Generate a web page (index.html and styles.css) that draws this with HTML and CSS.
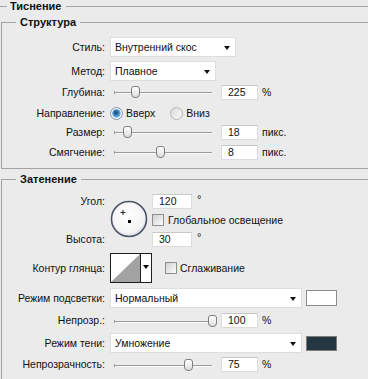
FILE: index.html
```html
<!DOCTYPE html>
<html lang="ru">
<head>
<meta charset="utf-8">
<title>Тиснение</title>
<link rel="stylesheet" href="styles.css">
</head>
<body>
<div class="panel">
  <div class="heading"><span class="hline short"></span><span class="htext">Тиснение</span><span class="hline"></span></div>

  <fieldset class="group structure">
    <legend>Структура</legend>
    <div class="row h20">
      <span class="lbl">Стиль:</span>
      <div class="select w-style"><span>Внутренний скос</span><i class="arrow"></i></div>
    </div>
    <div class="row h20 mt4">
      <span class="lbl">Метод:</span>
      <div class="select w-method"><span>Плавное</span><i class="arrow"></i></div>
    </div>
    <div class="row h16 mt3">
      <span class="lbl">Глубина:</span>
      <div class="slider"><span class="track"></span><span class="thumb" style="left:21px"></span></div>
      <div class="input w-num">225</div><span class="unit">%</span>
    </div>
    <div class="row h16 mt5">
      <span class="lbl">Направление:</span>
      <span class="radio-item">
        <svg class="radio" width="13" height="13" viewBox="0 0 13 13">
          <defs><radialGradient id="rbsel" cx="45%" cy="40%" r="60%"><stop offset="0" stop-color="#1a3f66"/><stop offset="0.35" stop-color="#2b6ca8"/><stop offset="1" stop-color="#7ec0ec"/></radialGradient></defs>
          <circle cx="6.5" cy="6.5" r="6" fill="#eef3f7" stroke="#7f97ad"/>
          <circle cx="6.5" cy="6.5" r="4.2" fill="url(#rbsel)"/>
        </svg>Вверх</span>
      <span class="radio-item second">
        <svg class="radio" width="13" height="13" viewBox="0 0 13 13">
          <defs><linearGradient id="rboff" x1="0" y1="0" x2="1" y2="1"><stop offset="0" stop-color="#d9d9d9"/><stop offset="1" stop-color="#fbfbfb"/></linearGradient></defs>
          <circle cx="6.5" cy="6.5" r="6" fill="url(#rboff)" stroke="#b4b4b4"/>
        </svg>Вниз</span>
    </div>
    <div class="row h16 mt3">
      <span class="lbl">Размер:</span>
      <div class="slider"><span class="track"></span><span class="thumb" style="left:13px"></span></div>
      <div class="input w-num">18</div><span class="unit">пикс.</span>
    </div>
    <div class="row h16 mt4">
      <span class="lbl">Смягчение:</span>
      <div class="slider"><span class="track"></span><span class="thumb" style="left:46px"></span></div>
      <div class="input w-num">8</div><span class="unit">пикс.</span>
    </div>
  </fieldset>

  <fieldset class="group shading">
    <legend>Затенение</legend>
    <div class="angle-block">
      <div class="lbl lbl-stack"><span>Угол:</span><span>Высота:</span></div>
      <svg class="dial" width="38" height="38" viewBox="0 0 38 38">
        <defs><radialGradient id="dialfill" cx="45%" cy="40%" r="60%"><stop offset="0" stop-color="#ffffff"/><stop offset="0.8" stop-color="#f4f4f6"/><stop offset="1" stop-color="#dcdde3"/></radialGradient></defs>
        <circle cx="19" cy="19" r="17.5" fill="url(#dialfill)" stroke="#4d5468" stroke-width="1.6"/>
        <path d="M13 10v5M10.5 12.5h5" stroke="#222" stroke-width="1"/>
        <rect x="18" y="20" width="3" height="3" fill="#000"/>
      </svg>
      <div class="angle-fields">
        <div class="frow h15"><div class="input w-angle">120</div><span class="deg">°</span></div>
        <div class="check-row mt5"><span class="checkbox"></span><span>Глобальное освещение</span></div>
        <div class="frow h14 mt6"><div class="input w-angle">30</div><span class="deg">°</span></div>
      </div>
    </div>
    <div class="row h30 mt7">
      <span class="lbl">Контур глянца:</span>
      <svg class="contour" width="42" height="30" viewBox="0 0 42 30">
        <rect x="0.5" y="0.5" width="41" height="29" fill="#fff" stroke="#1e1e1e"/>
        <polygon points="1,29 30,1 30,29" fill="#a2a2a2"/>
        <line x1="30.5" y1="1" x2="30.5" y2="29" stroke="#1e1e1e"/>
        <polygon points="33,12 39,12 36,16" fill="#000"/>
      </svg>
      <span class="check-row smooth"><span class="checkbox"></span><span>Сглаживание</span></span>
    </div>
    <div class="row h20 mt5">
      <span class="lbl">Режим подсветки:</span>
      <div class="select w-mode"><span>Нормальный</span><i class="arrow"></i></div>
      <span class="swatch light"></span>
    </div>
    <div class="row h15 mt5">
      <span class="lbl">Непрозр.:</span>
      <div class="slider"><span class="track"></span><span class="thumb" style="left:98px"></span></div>
      <div class="input w-num">100</div><span class="unit">%</span>
    </div>
    <div class="row h20 mt5">
      <span class="lbl">Режим тени:</span>
      <div class="select w-mode"><span>Умножение</span><i class="arrow"></i></div>
      <span class="swatch dark"></span>
    </div>
    <div class="row h15 mt4">
      <span class="lbl">Непрозрачность:</span>
      <div class="slider"><span class="track"></span><span class="thumb" style="left:74px"></span></div>
      <div class="input w-num">75</div><span class="unit">%</span>
    </div>
  </fieldset>
</div>
</body>
</html>
```

FILE: styles.css
```css
* { box-sizing: border-box; }
html, body { margin: 0; padding: 0; }
body {
  width: 368px;
  height: 379px;
  overflow: hidden;
  background: #ebebeb;
  font-family: "Liberation Sans", Arial, sans-serif;
  font-size: 10.5px;
  color: #111;
}
.panel { width: 368px; }

.heading { display: flex; align-items: center; height: 13px; }
.hline { height: 1px; background: #a3a3a3; flex: 1; }
.hline.short { flex: none; width: 7px; }
.htext { font-weight: bold; font-size: 11px; line-height: 13px; margin: 0 5px 0 3px; }

.group {
  margin: 3px 0 0 1px;
  padding: 8px 0 8px 0;
  border: 1px solid #a3a3a3;
  border-right: none;
  min-width: 0;
  width: 367px;
}
.group legend {
  margin-left: 14px;
  padding: 0 4px;
  font-weight: bold;
  font-size: 11px;
  line-height: 13px;
}
.shading { margin-top: 4px; }

.row { display: flex; align-items: center; }
.h14 { height: 14px; }
.h15 { height: 15px; }
.h16 { height: 16px; }
.h20 { height: 20px; }
.h30 { height: 30px; }
.mt3 { margin-top: 3px; }
.mt4 { margin-top: 4px; }
.mt5 { margin-top: 5px; }
.mt6 { margin-top: 6px; }
.mt7 { margin-top: 7px; }

.lbl {
  flex: none;
  width: 103px;
  margin-right: 5px;
  text-align: right;
  line-height: 13px;
  white-space: nowrap;
}

.select {
  position: relative;
  height: 20px;
  background: #fff;
  border: 1px solid #dedede;
  padding-left: 4px;
  line-height: 18px;
  white-space: nowrap;
}
.w-style { width: 126px; }
.w-method { width: 106px; }
.w-mode { width: 192px; }
.arrow {
  position: absolute;
  right: 5px;
  top: 8px;
  width: 0;
  height: 0;
  border-left: 3.5px solid transparent;
  border-right: 3.5px solid transparent;
  border-top: 4px solid #111;
}

.slider {
  position: relative;
  flex: none;
  width: 106px;
  height: 14px;
  margin-right: 5px;
}
.track {
  position: absolute;
  left: 4px;
  right: 4px;
  top: 7px;
  height: 1px;
  background: #9c9c9c;
  box-shadow: 0 1px 0 #fafafa;
}
.track::before {
  content: "";
  position: absolute;
  left: 0;
  top: -1px;
  width: 1px;
  height: 3px;
  background: #9c9c9c;
}
.thumb {
  position: absolute;
  top: 1px;
  width: 9px;
  height: 12px;
  border: 1px solid #7e7e7e;
  border-radius: 3px 3px 4px 4px;
  background: linear-gradient(#ffffff, #dcdcdc);
}

.input {
  flex: none;
  height: 15px;
  background: #fff;
  border: 1px solid #dcdcdc;
  border-top-color: #c8c8c8;
  padding-left: 6px;
  line-height: 13px;
}
.w-num { width: 37px; }
.w-angle { width: 40px; }
.unit { margin-left: 4px; line-height: 13px; }
.deg { margin-left: 5px; align-self: flex-start; line-height: 11px; font-size: 11px; }

.radio-item { display: flex; align-items: center; gap: 3px; }
.radio-item.second { margin-left: 15px; }
.radio { display: block; flex: none; }

.angle-block { display: flex; align-items: flex-start; height: 52px; }
.lbl-stack {
  height: 52px;
  display: flex;
  flex-direction: column;
  justify-content: space-between;
  align-items: flex-end;
}
.lbl-stack span { line-height: 14px; }
.dial { display: block; flex: none; margin-top: 6px; }
.angle-fields { margin-left: 4px; display: flex; flex-direction: column; }
.frow { display: flex; align-items: stretch; }

.check-row { display: flex; align-items: center; gap: 4px; height: 12px; line-height: 13px; white-space: nowrap; }
.checkbox {
  flex: none;
  width: 12px;
  height: 12px;
  border: 1px solid #8f8f8f;
  background: linear-gradient(135deg, #d2d2d2, #fbfbfb);
}
.contour { display: block; flex: none; }
.smooth { margin-left: 13px; gap: 3px; }

.swatch { flex: none; width: 31px; margin-left: 4px; border: 1px solid #8c8c8c; }
.swatch.light { height: 16px; background: #fff; }
.swatch.dark { height: 15px; background: #243741; border-color: #7c7c7c; }
```
